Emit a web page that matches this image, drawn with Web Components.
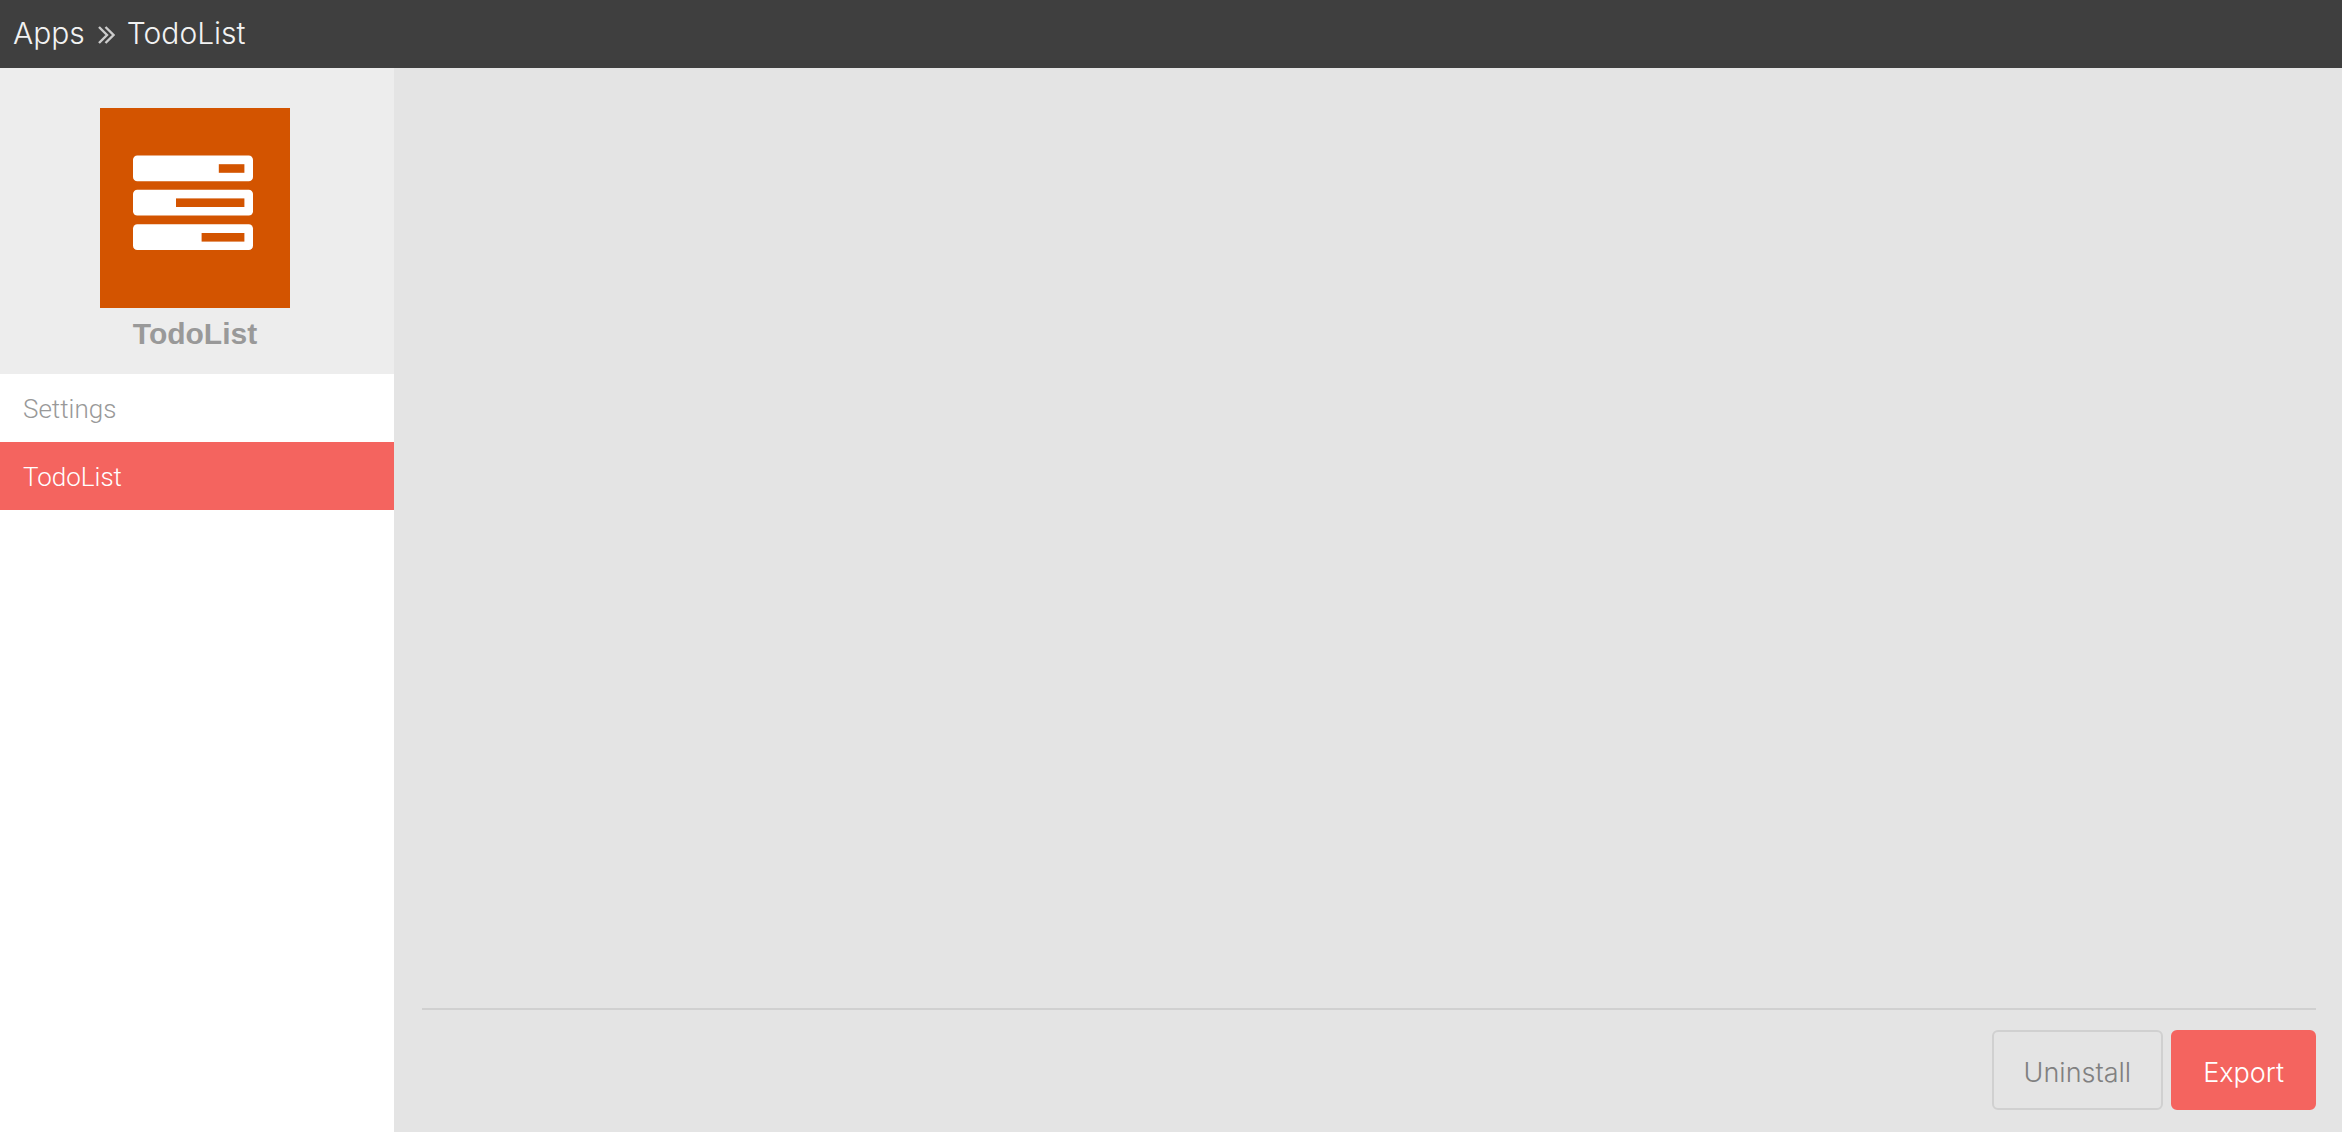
<!DOCTYPE html>
<html lang="en">
<head>
<meta charset="utf-8">
<title>Apps » TodoList</title>
<style>
html, body { margin: 0; height: 100%; }
body { font-family: Inter, "Liberation Sans", sans-serif; font-weight: 300; background: #e4e4e4; }
</style>
</head>
<body>
<app-shell>
  <app-breadcrumb slot="header" parent="Apps" current="TodoList"></app-breadcrumb>
  <app-sidebar slot="sidebar" name="TodoList">
    <nav-item>Settings</nav-item>
    <nav-item active>TodoList</nav-item>
  </app-sidebar>
  <action-bar slot="footer">
    <action-button>Uninstall</action-button>
    <action-button primary>Export</action-button>
  </action-bar>
</app-shell>
<script>
function define(name, html) {
  customElements.define(name, class extends HTMLElement {
    constructor() {
      super();
      this.attachShadow({ mode: "open" }).innerHTML = html;
    }
    connectedCallback() {
      for (const el of this.shadowRoot.querySelectorAll("[data-attr]")) {
        el.textContent = this.getAttribute(el.dataset.attr);
      }
    }
  });
}

define("app-shell", `
  <style>
    :host { display: flex; flex-direction: column; min-height: 100vh; }
    .body { flex: 1; display: flex; }
    main { flex: 1; min-width: 0; display: flex; flex-direction: column; padding: 0 26px 22px 28px; }
    .content { flex: 1; }
  </style>
  <slot name="header"></slot>
  <div class="body">
    <slot name="sidebar"></slot>
    <main><div class="content"><slot></slot></div><slot name="footer"></slot></main>
  </div>`);

define("app-breadcrumb", `
  <style>
    :host { display: block; background: #3f3f3f; color: #f2f2f2; }
    nav { display: flex; align-items: center; gap: 12px; box-sizing: border-box; height: 68px; padding: 0 13px 2px; font-size: 30px; line-height: 36px; }
    a { color: inherit; text-decoration: none; }
    svg { display: block; width: 18px; height: 18px; margin-top: 4px; }
  </style>
  <nav aria-label="Breadcrumb">
    <a href="#apps" data-attr="parent"></a>
    <svg viewBox="0 0 18 18" fill="none" stroke="#ccc" stroke-width="2.4" aria-hidden="true"><path d="M2 1l8 8-8 8M8.500 1l8 8-8 8"/></svg>
    <span data-attr="current"></span>
  </nav>`);

define("app-sidebar", `
  <style>
    :host { display: flex; flex-direction: column; flex: none; width: 394px; background: #fff; }
    header { display: flex; flex-direction: column; align-items: center; gap: 8px; padding: 40px 4px 22px 0; background: #ededed; }
    svg { display: block; width: 190px; height: 200px; }
    h1 { margin: 0; font: bold 30px/36px "Liberation Sans", Arial, sans-serif; color: #999; }
    nav { display: flex; flex-direction: column; }
  </style>
  <header>
    <svg viewBox="0 0 190 200" aria-hidden="true">
      <rect width="190" height="200" fill="#d35400"/>
      <g fill="#fff">
        <rect x="33" y="47.4" width="120" height="25.8" rx="4.3"/>
        <rect x="33" y="81.8" width="120" height="25.8" rx="4.3"/>
        <rect x="33" y="116.2" width="120" height="25.8" rx="4.3"/>
      </g>
      <g fill="#d35400">
        <rect x="118.8" y="56.2" width="25.6" height="8.6"/>
        <rect x="76" y="90.4" width="68.4" height="8.6"/>
        <rect x="101.6" y="125" width="42.8" height="8.6"/>
      </g>
    </svg>
    <h1 data-attr="name"></h1>
  </header>
  <nav aria-label="Sections"><slot></slot></nav>`);

define("nav-item", `
  <style>
    :host { display: block; color: #999; }
    :host([active]) { background: #f4645f; color: #fff; }
    a { display: block; padding: 17px 23px 15px; font: 300 26px/36px Roboto, "Liberation Sans", sans-serif; color: inherit; text-decoration: none; }
  </style>
  <a href="#section"><slot></slot></a>`);

define("action-bar", `
  <style>
    :host { display: flex; justify-content: flex-end; gap: 8px; padding-top: 20px; border-top: 2px solid #d0d0d0; }
  </style>
  <slot></slot>`);

define("action-button", `
  <style>
    :host { display: block; }
    button { display: block; box-sizing: border-box; height: 80px; padding: 6px 30px 0; border: 2px solid #d0d0d0; border-radius: 6px; background: transparent; color: #808080; font: inherit; font-size: 27px; line-height: 36px; cursor: pointer; }
    :host([primary]) button { border-color: #f4645f; background: #f4645f; color: #fff; }
  </style>
  <button type="button"><slot></slot></button>`);
</script>
</body>
</html>
